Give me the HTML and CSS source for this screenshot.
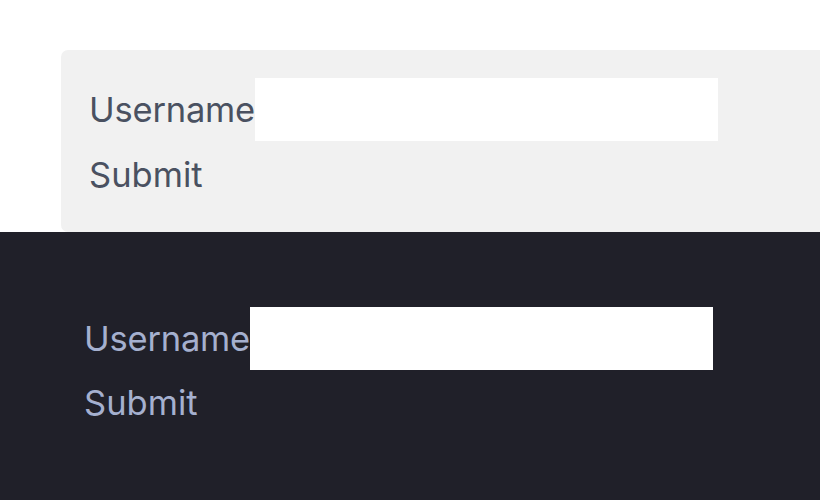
FILE: index.html
```html
<!DOCTYPE html>
<html>
<head>
<meta charset="utf-8">
<link rel="stylesheet" href="styles.css">
</head>
<body>
<section class="light">
  <form class="card">
    <div class="row">
      <label class="label">Username</label><input class="field" type="text">
    </div>
    <div class="submit">Submit</div>
  </form>
</section>
<section class="dark">
  <form class="plain">
    <div class="row">
      <label class="label">Username</label><input class="field" type="text">
    </div>
    <div class="submit">Submit</div>
  </form>
</section>
</body>
</html>
```
FILE: styles.css
```css
html, body {
  margin: 0;
  padding: 0;
  overflow: hidden;
  width: 820px;
  height: 500px;
}
body {
  font-family: Inter, "DejaVu Sans", sans-serif;
  font-size: 34.5px;
}
.light {
  background: #ffffff;
  padding: 50px 0 0 61px;
}
.card {
  background: #f1f1f1;
  border-radius: 7px 0 0 7px;
  width: 760px;
  padding: 28px 0 0 28px;
  height: 154px;
  margin: 0;
  box-sizing: content-box;
}
.row {
  display: flex;
  align-items: center;
  height: 63px;
}
.label {
  color: #4a5161;
  white-space: nowrap;
  flex-shrink: 0;
  width: 166px;
  letter-spacing: -0.2px;
}
.field {
  width: 463px;
  height: 63px;
  border: none;
  background: #ffffff;
  padding: 0;
  margin: 0;
  outline: none;
  flex-shrink: 0;
}
.submit {
  color: #4a5161;
  line-height: 68px;
}
.dark {
  background: #202029;
  height: 268px;
  box-sizing: border-box;
  padding: 75px 0 0 84px;
}
.dark .label,
.dark .submit {
  color: #a5b0cf;
}
.dark .submit {
  line-height: 66px;
}
.plain {
  margin: 0;
}
```
